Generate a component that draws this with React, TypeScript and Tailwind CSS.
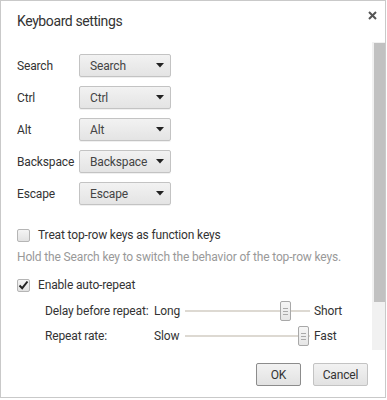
import React from "react";

const font = { fontFamily: "Roboto, 'Noto Sans', sans-serif" };

function Select({ value }: { value: string }) {
  return (
    <div className="flex h-[23px] w-[92px] items-center justify-between rounded-[2px] border border-[#c3c3c3] bg-gradient-to-b from-[#f2f2f2] to-[#e4e4e4] pl-[10px] pr-[6px] text-[12px] text-[#444] shadow-[0_1px_0_rgba(0,0,0,0.06)]">
      <span>{value}</span>
      <svg width="8" height="5" viewBox="0 0 8 5">
        <path d="M0 0 H8 L4 4.5 Z" fill="#222" />
      </svg>
    </div>
  );
}

function Checkbox({ checked }: { checked?: boolean }) {
  return (
    <div className="flex h-[13px] w-[13px] items-center justify-center rounded-[2px] border border-[#b5b5b5] bg-gradient-to-b from-[#f4f4f4] to-[#e2e2e2]">
      {checked && (
        <svg width="11" height="10" viewBox="0 0 11 10">
          <path d="M1.5 5.5 L4.2 8.2 L9.5 1.5" stroke="#222" strokeWidth="2" fill="none" />
        </svg>
      )}
    </div>
  );
}

function Slider({ offset }: { offset: number }) {
  return (
    <div className="relative flex h-[20px] w-[125px] items-center">
      <div className="h-[2px] w-full bg-[#ddd9d2]" />
      <div
        className="absolute top-0 flex h-[20px] w-[11px] flex-col items-center justify-center gap-[2px] rounded-[2px] border border-[#a8a8a8] bg-gradient-to-b from-[#f6f6f6] to-[#e6e6e6]"
        style={{ left: offset }}
      >
        <div className="h-px w-[5px] bg-[#aaa]" />
        <div className="h-px w-[5px] bg-[#aaa]" />
        <div className="h-px w-[5px] bg-[#aaa]" />
      </div>
    </div>
  );
}

const keys = ["Search", "Ctrl", "Alt", "Backspace", "Escape"];

export default function App() {
  return (
    <div style={font} className="flex h-[398px] w-[386px] flex-col border border-[#c9c9c9] bg-white text-[#333] tracking-[-0.15px]">
      <div className="flex h-[41px] items-start justify-between pl-[16px] pr-[8px]">
        <div className="pt-[10px] text-[14px] tracking-[-0.4px] text-[#333]">Keyboard settings</div>
        <svg className="mt-[10px]" width="9" height="9" viewBox="0 0 9 9">
          <path d="M1 1 L8 8 M8 1 L1 8" stroke="#555" strokeWidth="2" />
        </svg>
      </div>

      <div className="flex h-[308px]">
        <div className="flex-1 pl-[16px] pt-[12px] text-[12px]">
          <div className="flex flex-col gap-[9px]">
            {keys.map((k) => (
              <div key={k} className="flex items-center">
                <div className="w-[62px]">{k}</div>
                <Select value={k} />
              </div>
            ))}
          </div>

          <div className="mt-[20px] flex h-[20px] items-center gap-[8px]">
            <Checkbox />
            <span>Treat top-row keys as function keys</span>
          </div>
          <div className="mt-[4px] h-[16px] leading-[16px] text-[#999]">
            Hold the Search key to switch the behavior of the top-row keys.
          </div>
          <div className="mt-[10px] flex h-[20px] items-center gap-[8px]">
            <Checkbox checked />
            <span>Enable auto-repeat</span>
          </div>

          <div className="mt-[6px] flex h-[20px] items-center pl-[28px]">
            <div className="w-[109px]">Delay before repeat:</div>
            <div className="w-[31px]">Long</div>
            <Slider offset={95} />
            <div className="pl-[4px]">Short</div>
          </div>
          <div className="mt-[5px] flex h-[20px] items-center pl-[28px]">
            <div className="w-[109px]">Repeat rate:</div>
            <div className="w-[31px]">Slow</div>
            <Slider offset={113} />
            <div className="pl-[4px]">Fast</div>
          </div>
        </div>
        <div className="w-[13px] bg-[#f1f1f1] pl-[2px] pt-[1px]">
          <div className="h-[259px] w-full bg-[#c1c1c1]" />
        </div>
      </div>

      <div className="flex flex-1 items-start justify-end gap-[12px] pr-[17px] pt-[13px] text-[12px]">
        <button className="h-[23px] w-[45px] rounded-[2px] border border-[#8c8c8c] bg-gradient-to-b from-[#f2f2f2] to-[#e2e2e2] text-[#333]">
          OK
        </button>
        <button className="h-[23px] w-[55px] rounded-[2px] border border-[#c3c3c3] bg-gradient-to-b from-[#f2f2f2] to-[#e2e2e2] text-[#333]">
          Cancel
        </button>
      </div>
    </div>
  );
}
